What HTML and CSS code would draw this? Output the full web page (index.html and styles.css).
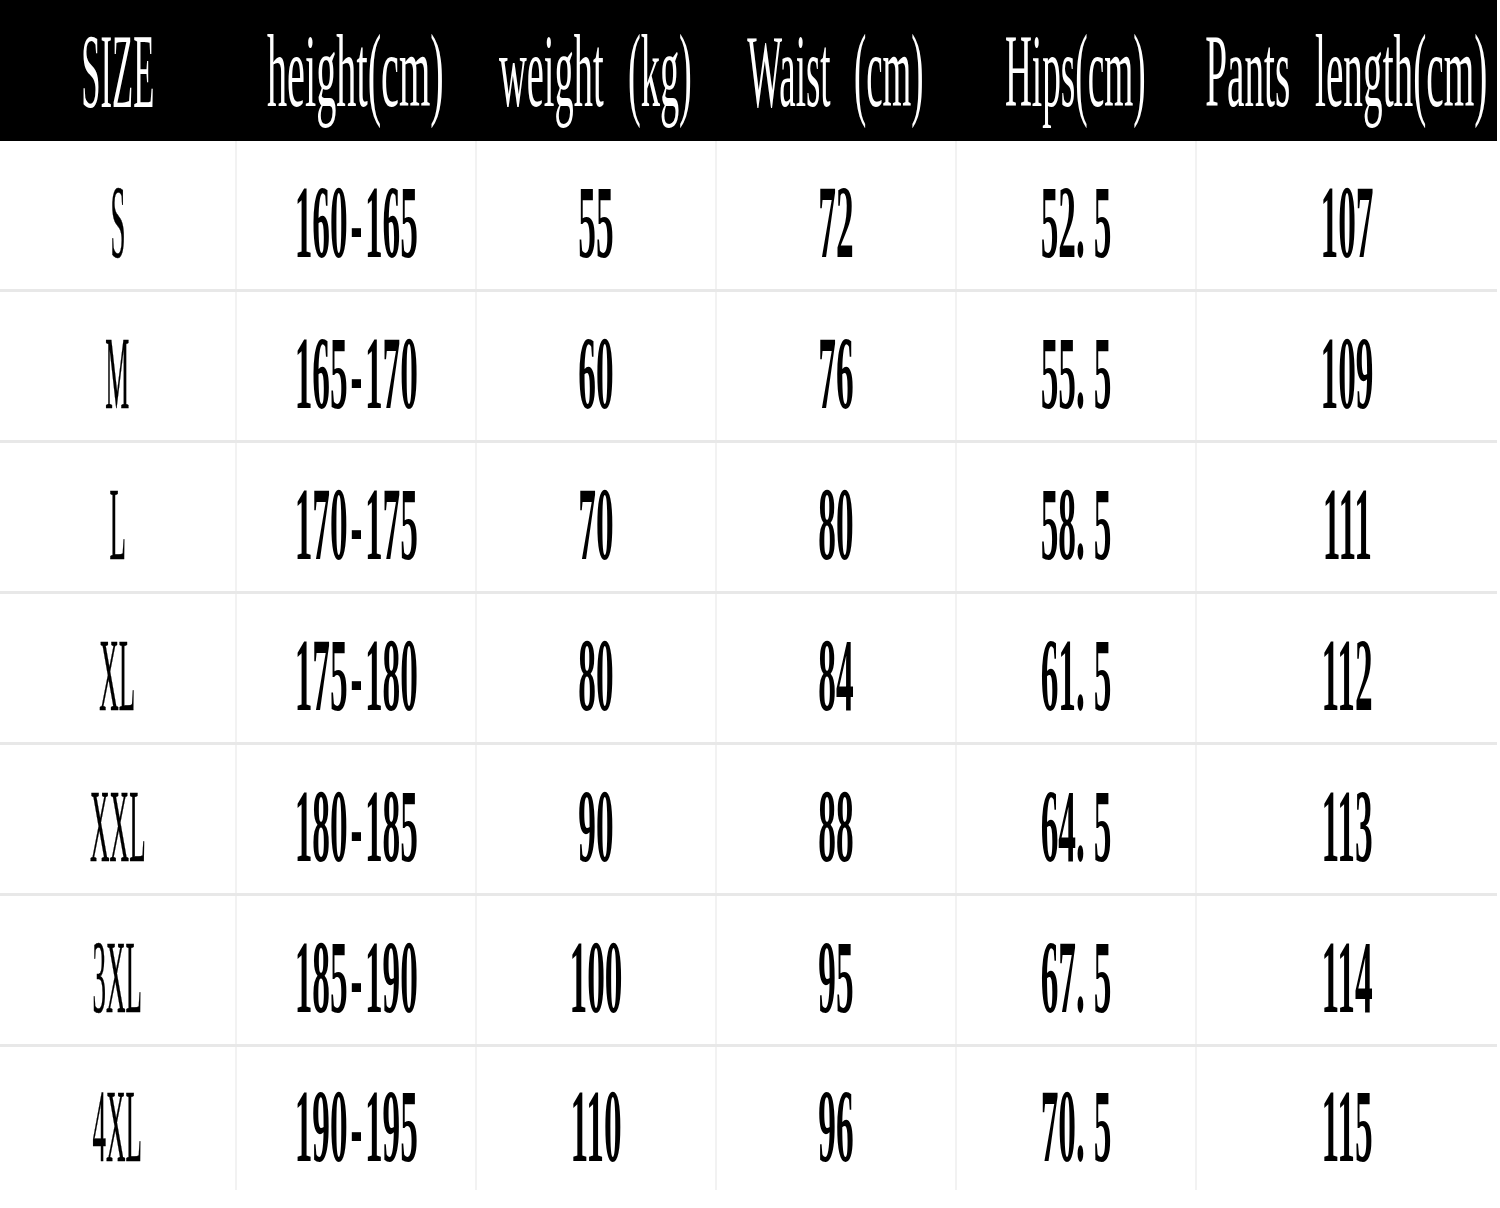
FILE: index.html
```html
<!DOCTYPE html>
<html lang="en">
<head>
<meta charset="utf-8">
<title>Size chart</title>
<link rel="stylesheet" href="styles.css">
</head>
<body>
<div class="chart">
  <div class="row head">
    <div class="cell"><span class="t s-size">SIZE</span></div>
    <div class="cell"><span class="t">height(cm)</span></div>
    <div class="cell"><span class="t s-weight">weight (kg)</span></div>
    <div class="cell"><span class="t s-waist">Waist (cm)</span></div>
    <div class="cell"><span class="t s-hips">Hips(cm)</span></div>
    <div class="cell"><span class="t s-pants">Pants length(cm)</span></div>
  </div>
  <div class="row">
    <div class="cell"><span class="t lbl">S</span></div>
    <div class="cell"><span class="t num">160<span class="d">-</span>165</span></div>
    <div class="cell"><span class="t num">55</span></div>
    <div class="cell"><span class="t num">72</span></div>
    <div class="cell"><span class="t num">52<span class="p">.</span>5</span></div>
    <div class="cell"><span class="t num">107</span></div>
  </div>
  <div class="row">
    <div class="cell"><span class="t lbl">M</span></div>
    <div class="cell"><span class="t num">165<span class="d">-</span>170</span></div>
    <div class="cell"><span class="t num">60</span></div>
    <div class="cell"><span class="t num">76</span></div>
    <div class="cell"><span class="t num">55<span class="p">.</span>5</span></div>
    <div class="cell"><span class="t num">109</span></div>
  </div>
  <div class="row">
    <div class="cell"><span class="t lbl">L</span></div>
    <div class="cell"><span class="t num">170<span class="d">-</span>175</span></div>
    <div class="cell"><span class="t num">70</span></div>
    <div class="cell"><span class="t num">80</span></div>
    <div class="cell"><span class="t num">58<span class="p">.</span>5</span></div>
    <div class="cell"><span class="t num">111</span></div>
  </div>
  <div class="row">
    <div class="cell"><span class="t lbl">XL</span></div>
    <div class="cell"><span class="t num">175<span class="d">-</span>180</span></div>
    <div class="cell"><span class="t num">80</span></div>
    <div class="cell"><span class="t num">84</span></div>
    <div class="cell"><span class="t num">61<span class="p">.</span>5</span></div>
    <div class="cell"><span class="t num">112</span></div>
  </div>
  <div class="row">
    <div class="cell"><span class="t lbl">XXL</span></div>
    <div class="cell"><span class="t num">180<span class="d">-</span>185</span></div>
    <div class="cell"><span class="t num">90</span></div>
    <div class="cell"><span class="t num">88</span></div>
    <div class="cell"><span class="t num">64<span class="p">.</span>5</span></div>
    <div class="cell"><span class="t num">113</span></div>
  </div>
  <div class="row">
    <div class="cell"><span class="t lbl">3XL</span></div>
    <div class="cell"><span class="t num">185<span class="d">-</span>190</span></div>
    <div class="cell"><span class="t num">100</span></div>
    <div class="cell"><span class="t num">95</span></div>
    <div class="cell"><span class="t num">67<span class="p">.</span>5</span></div>
    <div class="cell"><span class="t num">114</span></div>
  </div>
  <div class="row last">
    <div class="cell"><span class="t lbl">4XL</span></div>
    <div class="cell"><span class="t num">190<span class="d">-</span>195</span></div>
    <div class="cell"><span class="t num">110</span></div>
    <div class="cell"><span class="t num">96</span></div>
    <div class="cell"><span class="t num">70<span class="p">.</span>5</span></div>
    <div class="cell"><span class="t num">115</span></div>
  </div>
</div>
</body>
</html>
```
FILE: styles.css
```css
html, body {
  margin: 0;
  padding: 0;
  background: #ffffff;
}

.chart {
  width: 1497px;
  font-family: "Liberation Serif", "Times New Roman", serif;
  overflow: hidden;
}

.row {
  display: grid;
  grid-template-columns: 235px 240px 240px 240px 240px 302px;
  height: 151px;
  border-bottom: 3px solid #e8e8e8;
  box-sizing: border-box;
}

.row.last {
  height: 143px;
  border-bottom: none;
}

.row.head {
  height: 141px;
  background: #000000;
  border-bottom: none;
  color: #ffffff;
}

.cell {
  display: flex;
  align-items: center;
  justify-content: center;
  white-space: nowrap;
  min-width: 0;
}

.row:not(.head) .cell {
  padding-top: 14px;
  box-sizing: border-box;
}

.row:not(.head) .cell + .cell {
  border-left: 2px solid #f2f2f2;
}

.t {
  display: inline-block;
  line-height: 1;
  transform-origin: center center;
}

.head .t {
  font-size: 105px;
  font-weight: 400;
  word-spacing: 40px;
  transform: scaleY(0.98) scaleX(0.384);
  padding-top: 2px;
}

.head .t.s-size { transform: scaleX(0.33); }
.head .t.s-weight { transform: scaleY(0.98) scaleX(0.366); }
.head .t.s-waist { transform: scaleY(0.98) scaleX(0.352); }
.head .t.s-hips { transform: scaleY(0.98) scaleX(0.355); }
.head .t.s-pants { transform: scaleY(0.98) scaleX(0.374); }

.num {
  font-size: 104px;
  font-weight: 700;
  color: #000000;
  transform: scaleX(0.34);
}

.num .d {
  padding: 0 8px;
}

.num .p {
  padding-right: 26px;
}

.lbl {
  font-size: 104px;
  font-weight: 400;
  color: #000000;
  transform: scaleX(0.26);
  -webkit-text-stroke: 0.6px #000000;
}
```
